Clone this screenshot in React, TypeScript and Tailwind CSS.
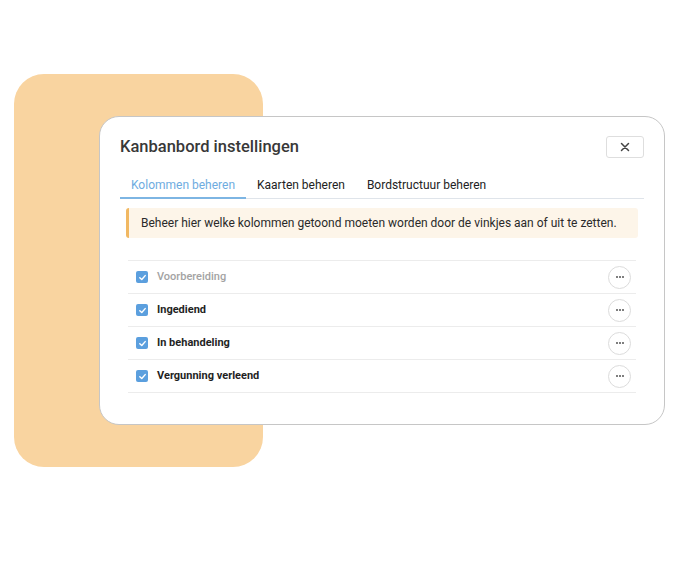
import React from "react";

const rows = [
  { label: "Voorbereiding", muted: true },
  { label: "Ingediend", muted: false },
  { label: "In behandeling", muted: false },
  { label: "Vergunning verleend", muted: false },
];

function Check() {
  return (
    <span className="flex h-[12px] w-[12px] items-center justify-center rounded-[2px] bg-[#5b9fde]">
      <svg width="9" height="9" viewBox="0 0 10 10" fill="none">
        <path d="M2 5.2 L4.2 7.3 L8 2.9" stroke="#fff" strokeWidth="1.6" strokeLinecap="round" strokeLinejoin="round" />
      </svg>
    </span>
  );
}

function Dots() {
  return (
    <span className="flex h-[23px] w-[23px] items-center justify-center rounded-full border border-[#dcdcdc] bg-white">
      <span className="flex gap-[1px]">
        <span className="h-[2px] w-[2px] rounded-full bg-[#555]" />
        <span className="h-[2px] w-[2px] rounded-full bg-[#555]" />
        <span className="h-[2px] w-[2px] rounded-full bg-[#555]" />
      </span>
    </span>
  );
}

export default function App() {
  return (
    <div
      className="relative h-[568px] w-[690px] overflow-hidden bg-white"
      style={{ fontFamily: "Roboto, 'Liberation Sans', sans-serif" }}
    >
      <div className="absolute left-[14px] top-[74px] h-[393px] w-[249px] rounded-[30px] bg-[#f9d4a0]" />
      <div className="absolute left-[99px] top-[116px] h-[309px] w-[566px] rounded-[20px] border border-[#c6c6c6] bg-white px-[20px] pt-[19px]">
        <div className="flex h-[22px] items-center justify-between">
          <h1 className="text-[16.5px] font-medium leading-none text-[#383838]">Kanbanbord instellingen</h1>
          <button className="flex h-[22px] w-[38px] items-center justify-center rounded-[3px] border border-[#dedede] bg-white">
            <svg width="10" height="10" viewBox="0 0 10 10">
              <path d="M1.5 1.5 L8.5 8.5 M8.5 1.5 L1.5 8.5" stroke="#444" strokeWidth="1.5" strokeLinecap="round" />
            </svg>
          </button>
        </div>

        <div className="mt-[14px] flex h-[27px] border-b border-[#dfe4ea] text-[12px]">
          <div className="-mb-px flex items-center border-b-2 border-[#7db5e3] px-[11px] text-[#6eacdf]">Kolommen beheren</div>
          <div className="flex items-center px-[11px] text-[#222]">Kaarten beheren</div>
          <div className="flex items-center px-[11px] text-[#222]">Bordstructuur beheren</div>
        </div>

        <div className="mx-[6px] mt-[9px] flex h-[30px] items-center rounded-[3px] border-l-[3px] border-[#f1b862] bg-[#fdf5e9] pl-[12px] text-[12px] text-[#2a2a2a]">
          Beheer hier welke kolommen getoond moeten worden door de vinkjes aan of uit te zetten.
        </div>

        <div className="mx-[8px] mt-[22px] border-t border-[#ececec]">
          {rows.map((r) => (
            <div key={r.label} className="flex h-[33px] items-center border-b border-[#ececec] pl-[8px] pr-[5px]">
              <Check />
              <span
                className={
                  r.muted
                    ? "ml-[9px] flex-1 text-[11px] font-medium text-[#a3a3a3]"
                    : "ml-[9px] flex-1 text-[11px] font-bold text-[#1f1f1f]"
                }
              >
                {r.label}
              </span>
              <Dots />
            </div>
          ))}
        </div>
      </div>
    </div>
  );
}
